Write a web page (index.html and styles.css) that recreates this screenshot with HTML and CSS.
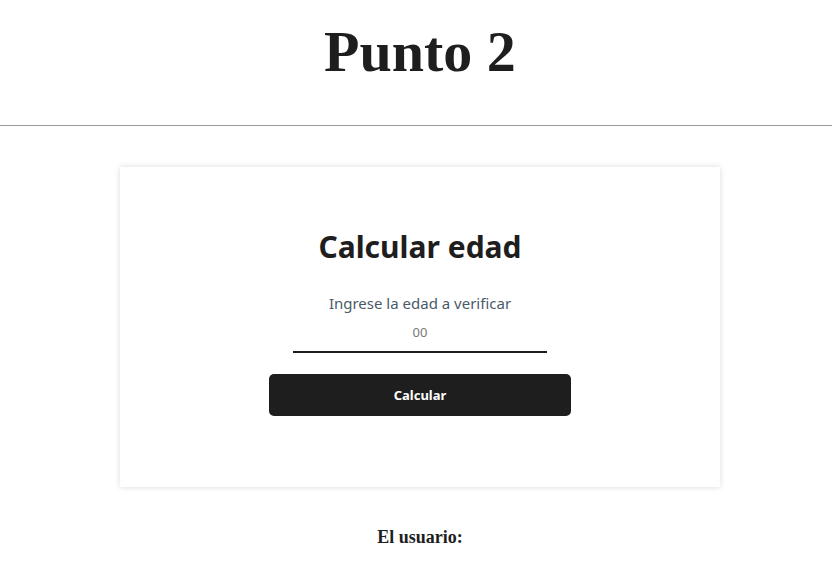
FILE: index.html
```html
<!DOCTYPE html>
<html lang="es">
<head>
<meta charset="utf-8">
<title>Punto 2</title>
<link rel="stylesheet" href="styles.css">
</head>
<body>
<header class="top">
  <h1 class="title">Punto 2</h1>
</header>
<main class="main">
  <section class="card">
    <h2 class="card-title">Calcular edad</h2>
    <label class="label" for="edad">Ingrese la edad a verificar</label>
    <input class="field" id="edad" type="text" placeholder="00">
    <button class="btn" type="button">Calcular</button>
  </section>
  <p class="result">El usuario:</p>
</main>
</body>
</html>
```
FILE: styles.css
```css
html, body {
  margin: 0;
  padding: 0;
  background: #fff;
}
body {
  font-family: "Liberation Serif", "Times New Roman", serif;
  color: #1e1e1e;
}
.top {
  border-bottom: 1px solid #999;
  padding-left: 8px;
  height: 125px;
  display: flex;
  justify-content: center;
  align-items: flex-start;
}
.title {
  margin: 16px 0 0;
  font-size: 58px;
  line-height: 72px;
  font-weight: bold;
}
.main {
  padding-left: 8px;
  display: flex;
  flex-direction: column;
  align-items: center;
}
.card {
  margin-top: 41px;
  width: 600px;
  height: 320px;
  box-sizing: border-box;
  box-shadow: 0 0 6px rgba(0,0,0,0.15);
  display: flex;
  flex-direction: column;
  align-items: center;
  font-family: "Noto Sans", "Open Sans", sans-serif;
}
.card-title {
  margin: 60px 0 0;
  font-size: 30px;
  line-height: 40px;
  font-weight: bold;
  color: #1e1e1e;
}
.label {
  margin-top: 25px;
  font-size: 15px;
  line-height: 22px;
  color: #4a5a6a;
}
.field {
  margin-top: 4px;
  width: 254px;
  height: 35px;
  box-sizing: border-box;
  border: 0;
  border-bottom: 2px solid #1e1e1e;
  outline: none;
  text-align: center;
  font-family: "Noto Sans", sans-serif;
  font-size: 13px;
  color: #1e1e1e;
  padding: 0 0 6px;
  background: transparent;
}
.field::placeholder {
  color: #777;
}
.btn {
  margin-top: 21px;
  width: 302px;
  height: 42px;
  border: 0;
  border-radius: 5px;
  background: #1e1e1e;
  color: #fff;
  font-family: "Noto Sans", sans-serif;
  font-weight: bold;
  font-size: 13px;
}
.result {
  margin: 40px 0 0;
  font-size: 18px;
  font-weight: bold;
}
```
